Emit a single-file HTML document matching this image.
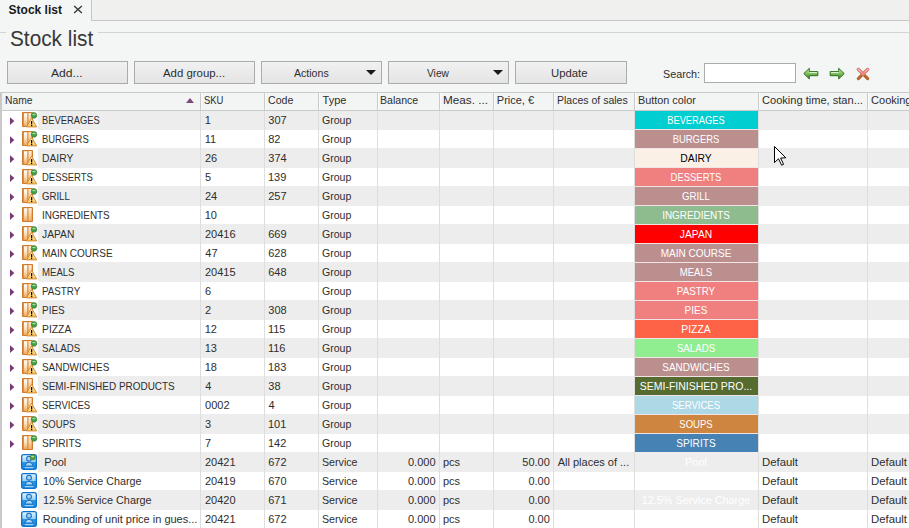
<!DOCTYPE html>
<html><head><meta charset="utf-8">
<style>
:root{--stripe:#EDEDED;--page:#F4F5F5;}
*{box-sizing:border-box;}
html,body{margin:0;padding:0;}
body{width:909px;height:528px;overflow:hidden;position:relative;background:var(--page);font-family:"Liberation Sans",sans-serif;font-size:11px;color:#2e2e2e;}
.abs{position:absolute;}
/* tab strip */
#tabfill{position:absolute;left:91px;top:0;width:818px;height:21px;background:#F0F0EF;border-left:1px solid #C6C6C6;border-bottom:1px solid #C6C6C6;}
#tabtxt{position:absolute;left:8.6px;top:2.6px;font-weight:bold;font-size:12px;line-height:14px;color:#1a1a1a;}
#tabx{position:absolute;left:73px;top:5px;width:10px;height:9px;}
/* title */
.gl{position:absolute;top:32px;height:1px;background:#D4D4D4;}
#title{position:absolute;left:9.6px;top:26px;font-size:22px;line-height:26px;color:#383838;transform:scaleX(0.945);transform-origin:0 50%;}
/* buttons */
.btn{position:absolute;top:61px;height:23px;border:1px solid #ABABAB;background:linear-gradient(#F1F1F1,#E4E4E4);}
.btn span{position:absolute;top:4px;line-height:13px;white-space:nowrap;}
.dd{position:absolute;top:8px;width:0;height:0;border-left:5px solid transparent;border-right:5px solid transparent;border-top:5px solid #1a1a1a;}
#search{position:absolute;left:663px;top:66px;line-height:13px;}
#sinput{position:absolute;left:704px;top:63px;width:92px;height:20px;background:#fff;border:1px solid #ABABAB;}
/* grid */
#gridtop{position:absolute;left:0;top:92px;width:909px;height:1px;background:#CACACA;}
#gridleft{position:absolute;left:0;top:92px;width:2px;height:436px;background:#C9C9C9;}
#hdr{position:absolute;left:2px;top:93px;width:907px;height:17px;background:#F3F4F4;}
#hdrb{position:absolute;left:2px;top:110px;width:907px;height:1px;background:#CACACA;}
.hvd{position:absolute;top:93px;width:1px;height:17px;background:#CACACA;box-shadow:1px 0 0 #FBFBFB;}

#sort{position:absolute;left:186px;top:98px;width:0;height:0;border-left:4.75px solid transparent;border-right:4.75px solid transparent;border-bottom:5px solid #7A4A7A;}
.row{position:absolute;left:38px;width:871px;height:19px;}
#namewhite{position:absolute;left:2px;top:111px;width:36px;height:417px;background:#fff;}
#gridwhite{position:absolute;left:38px;top:111px;width:871px;height:417px;background:#fff;}
.vd{position:absolute;top:111px;width:1px;height:417px;background:#DEDEDE;}
.exp{position:absolute;left:10px;}
.ic{position:absolute;overflow:visible;}
.t,.ht,.bt{position:absolute;line-height:19px;white-space:nowrap;transform-origin:0 50%;}
.ht{line-height:15px;}
.bt{top:65px!important;line-height:17px;}
.st{top:66px!important;}
.bl{position:absolute;width:400px;text-align:center;line-height:19px;white-space:nowrap;transform-origin:50% 50%;}
.t.r{text-align:right;}
.caps{letter-spacing:-0.9px;}
.btnc{position:absolute;left:635px;width:123px;height:18px;box-shadow:-1px 0 0 #F2E4E4, 0 -1px 0 #F2E4E4;}
#cursor{position:absolute;left:773px;top:145px;}
</style></head><body>
<svg width="0" height="0" style="position:absolute">
<defs>
<linearGradient id="gbookv" x1="0" y1="0" x2="0" y2="1"><stop offset="0" stop-color="#F6C890"/><stop offset="1" stop-color="#EC9638"/></linearGradient>
<linearGradient id="ghi" x1="0" y1="0" x2="0" y2="1"><stop offset="0" stop-color="#FFFFFF"/><stop offset="0.5" stop-color="#FBE2BE"/><stop offset="1" stop-color="#F0A65A"/></linearGradient>
<linearGradient id="ghi2" x1="0" y1="0" x2="0" y2="1"><stop offset="0" stop-color="#FDF0DC"/><stop offset="1" stop-color="#F2B068"/></linearGradient>
<linearGradient id="gwarn" x1="0" y1="0" x2="0" y2="1"><stop offset="0" stop-color="#FFF3C8"/><stop offset="1" stop-color="#F8C860"/></linearGradient>
<linearGradient id="gsvc" x1="0" y1="0" x2="0" y2="1"><stop offset="0" stop-color="#EAF8FF"/><stop offset="0.48" stop-color="#98D0F4"/><stop offset="0.52" stop-color="#2A96E2"/><stop offset="1" stop-color="#1A88DA"/></linearGradient><linearGradient id="gbody" x1="0" y1="0" x2="0" y2="1"><stop offset="0" stop-color="#E6F6FF"/><stop offset="1" stop-color="#6DB8EC"/></linearGradient>
<g id="book">
 <path d="M0.5 0.5 H10.5 V14.5 H0.5 Z" fill="url(#gbookv)" stroke="#CF7A2C"/>
 <rect x="1" y="1" width="1" height="13" fill="#E48E3A"/>
 <rect x="2" y="1.5" width="3.2" height="12.5" fill="url(#ghi)"/>
 <path d="M6 1 V14" stroke="#D98536" stroke-width="1" fill="none"/>
 <rect x="6.6" y="1.2" width="2.6" height="12.8" fill="url(#ghi2)"/>
</g>
<g id="warn">
 <path d="M9.6 6.3 L14.7 14.9 L4.5 14.9 Z" fill="url(#gwarn)" stroke="#D58A30" stroke-width="1" stroke-linejoin="round"/>
 <rect x="9" y="9.1" width="1.25" height="3.3" fill="#000"/>
 <rect x="9" y="13" width="1.25" height="1.1" fill="#000"/>
</g>
<g id="gdot">
 <circle cx="12" cy="3.4" r="2.8" fill="#44A044" stroke="#2F7A2F" stroke-width="0.6"/>
 <ellipse cx="12" cy="2.5" rx="1.8" ry="0.8" fill="#A6DC9E"/>
</g>
<g id="gdot2">
 <circle cx="11.8" cy="3.3" r="2.6" fill="#5E9E3A" stroke="#3F7A22" stroke-width="0.7"/>
 <ellipse cx="11.7" cy="2.5" rx="1.5" ry="0.7" fill="#B5E2AA"/>
</g>
<g id="svc">
 <rect x="0.65" y="0.65" width="14.7" height="14.7" rx="2" fill="url(#gsvc)" stroke="#0E72CC" stroke-width="1.3"/>
 <path d="M4 12.2 Q4 8.4 8 8.4 Q12 8.4 12 12.2 Z" fill="url(#gbody)" stroke="#1670C6" stroke-width="1"/>
 <circle cx="8" cy="4.7" r="2.4" fill="#A8D4F4" stroke="#1670C6" stroke-width="1.1"/>
 <path d="M3.8 13.7 H12.4" stroke="#CDEBFF" stroke-width="0.9"/>
</g>
</defs></svg>

<div id="tabfill"></div>
<div id="tabtxt">Stock list</div>
<svg id="tabx" viewBox="0 0 10 9"><path d="M1.2 1 L8.8 8 M8.8 1 L1.2 8" stroke="#3a3a3a" stroke-width="1.45"/></svg>

<div class="gl" style="left:0;width:6px"></div>
<div class="gl" style="left:98px;width:811px"></div>
<div id="title">Stock list</div>

<div class="btn" style="left:7px;width:121px"></div>
<div class="btn" style="left:134px;width:121px"></div>
<div class="btn" style="left:261px;width:121px"><div class="dd" style="left:104px"></div></div>
<div class="btn" style="left:388px;width:121px"><div class="dd" style="left:104px"></div></div>
<div class="btn" style="left:515px;width:112px"></div>
<div class="bt" style="left:51.20px;top:0px;transform:scaleX(1.101)">Add...</div><div class="bt" style="left:162.70px;top:0px;transform:scaleX(1.036)">Add group...</div><div class="bt" style="left:294.00px;top:0px;transform:scaleX(0.961)">Actions</div><div class="bt" style="left:427.41px;top:0px;transform:scaleX(0.928)">View</div><div class="bt" style="left:551.48px;top:0px;transform:scaleX(1.029)">Update</div><div class="bt st" style="left:663.11px;top:0px;transform:scaleX(0.978)">Search:</div>
<div id="sinput"></div>
<svg class="abs" style="left:803px;top:67px" width="16" height="13" viewBox="0 0 16 13">
 <defs><linearGradient id="garr" x1="0" y1="0" x2="0" y2="1"><stop offset="0" stop-color="#D8F0C8"/><stop offset="0.5" stop-color="#7CC05A"/><stop offset="1" stop-color="#3E8A2A"/></linearGradient></defs>
 <path d="M0.8 6.6 L6.3 1.3 L6.3 4.5 L14.8 4.5 L14.8 8.7 L6.3 8.7 L6.3 11.9 Z" fill="url(#garr)" stroke="#2F6E1E" stroke-width="1" stroke-linejoin="round"/>
 <path d="M6.3 5.4 H14" stroke="#F4FFF0" stroke-width="1" opacity="0.85"/>
</svg>
<svg class="abs" style="left:829px;top:67px" width="16" height="13" viewBox="0 0 16 13">
 <path d="M15.2 6.6 L9.7 1.3 L9.7 4.5 L1.2 4.5 L1.2 8.7 L9.7 8.7 L9.7 11.9 Z" fill="url(#garr)" stroke="#2F6E1E" stroke-width="1" stroke-linejoin="round"/>
 <path d="M2 5.4 H9.7" stroke="#F4FFF0" stroke-width="1" opacity="0.85"/>
</svg>
<svg class="abs" style="left:856px;top:67px" width="14" height="14" viewBox="0 0 14 14">
 <path d="M2.3 2.3 L11.7 11.7 M11.7 2.3 L2.3 11.7" stroke="#B5652E" stroke-width="3.1" stroke-linecap="round"/>
 <path d="M2.3 2.3 L7 7 L11.7 2.3" stroke="#E98585" stroke-width="3.1" stroke-linecap="round" fill="none"/>
 <path d="M2.3 2.3 L5 5 M11.7 2.3 L9 5" stroke="#F8C8C8" stroke-width="1" stroke-linecap="round" fill="none"/>
</svg>

<div id="gridtop"></div>
<div id="hdr"></div>
<div class="hvd" style="left:200px"></div><div class="hvd" style="left:264px"></div><div class="hvd" style="left:318px"></div><div class="hvd" style="left:377px"></div><div class="hvd" style="left:439px"></div><div class="hvd" style="left:493px"></div><div class="hvd" style="left:553px"></div><div class="hvd" style="left:634px"></div><div class="hvd" style="left:758px"></div><div class="hvd" style="left:867px"></div>
<div class="ht" style="left:4.86px;top:93px;transform:scaleX(0.935)">Name</div><div class="ht" style="left:204.37px;top:93px;transform:scaleX(0.859)">SKU</div><div class="ht" style="left:268.22px;top:93px;transform:scaleX(0.964)">Code</div><div class="ht" style="left:322.60px;top:93px">Type</div><div class="ht" style="left:380.44px;top:93px;transform:scaleX(0.961)">Balance</div><div class="ht" style="left:442.74px;top:93px;transform:scaleX(1.067)">Meas. ...</div><div class="ht" style="left:496.80px;top:93px">Price, €</div><div class="ht" style="left:556.84px;top:93px;transform:scaleX(0.956)">Places of sales</div><div class="ht" style="left:637.71px;top:93px;transform:scaleX(0.986)">Button color</div><div class="ht" style="left:762.10px;top:93px;transform:scaleX(1.006)">Cooking time, stan...</div><div class="ht" style="left:871.10px;top:93px">Cooking</div>
<div id="sort"></div>
<div id="namewhite"></div><div id="gridwhite"></div>
<div class="row" style="top:110px;height:20px;background:var(--stripe)"></div>
<svg class="exp" style="top:117px" width="6" height="9"><path d="M0 0.3 L4.3 4.1 L0 7.9 Z" fill="#763A76"/></svg>
<svg class="ic" style="left:22px;top:112px" width="16" height="16"><use href="#book"/><use href="#warn"/><use href="#gdot"/></svg>
<div class="t" style="left:41.84px;top:111px;transform:scaleX(0.849)">BEVERAGES</div>
<div class="t" style="left:204.70px;top:111px">1</div>
<div class="t" style="left:268.30px;top:111px">307</div>
<div class="t" style="left:322.32px;top:111px;transform:scaleX(0.960)">Group</div>
<div class="btnc" style="top:111px;background:#00CED1"></div>
<div class="bl" style="left:496px;top:111px;color:#fff;transform:scaleX(0.849)">BEVERAGES</div>
<svg class="exp" style="top:136px" width="6" height="9"><path d="M0 0.3 L4.3 4.1 L0 7.9 Z" fill="#763A76"/></svg>
<svg class="ic" style="left:22px;top:131px" width="16" height="16"><use href="#book"/><use href="#warn"/><use href="#gdot"/></svg>
<div class="t" style="left:41.83px;top:130px;transform:scaleX(0.858)">BURGERS</div>
<div class="t" style="left:204.70px;top:130px">11</div>
<div class="t" style="left:268.20px;top:130px">82</div>
<div class="t" style="left:322.32px;top:130px;transform:scaleX(0.960)">Group</div>
<div class="btnc" style="top:130px;background:#BC8F8F"></div>
<div class="bl" style="left:496px;top:130px;color:#fff;transform:scaleX(0.858)">BURGERS</div>
<div class="row" style="top:148px;height:20px;background:var(--stripe)"></div>
<svg class="exp" style="top:155px" width="6" height="9"><path d="M0 0.3 L4.3 4.1 L0 7.9 Z" fill="#763A76"/></svg>
<svg class="ic" style="left:22px;top:150px" width="16" height="16"><use href="#book"/><use href="#warn"/></svg>
<div class="t" style="left:41.76px;top:149px;transform:scaleX(0.938)">DAIRY</div>
<div class="t" style="left:205.00px;top:149px">26</div>
<div class="t" style="left:268.30px;top:149px">374</div>
<div class="t" style="left:322.32px;top:149px;transform:scaleX(0.960)">Group</div>
<div class="btnc" style="top:149px;background:#FAF0E6"></div>
<div class="bl" style="left:496px;top:149px;color:#000;transform:scaleX(0.938)">DAIRY</div>
<svg class="exp" style="top:174px" width="6" height="9"><path d="M0 0.3 L4.3 4.1 L0 7.9 Z" fill="#763A76"/></svg>
<svg class="ic" style="left:22px;top:169px" width="16" height="16"><use href="#book"/><use href="#warn"/><use href="#gdot"/></svg>
<div class="t" style="left:41.83px;top:168px;transform:scaleX(0.860)">DESSERTS</div>
<div class="t" style="left:205.10px;top:168px">5</div>
<div class="t" style="left:267.90px;top:168px">139</div>
<div class="t" style="left:322.32px;top:168px;transform:scaleX(0.960)">Group</div>
<div class="btnc" style="top:168px;background:#F08080"></div>
<div class="bl" style="left:496px;top:168px;color:#fff;transform:scaleX(0.860)">DESSERTS</div>
<div class="row" style="top:186px;height:20px;background:var(--stripe)"></div>
<svg class="exp" style="top:193px" width="6" height="9"><path d="M0 0.3 L4.3 4.1 L0 7.9 Z" fill="#763A76"/></svg>
<svg class="ic" style="left:22px;top:188px" width="16" height="16"><use href="#book"/><use href="#warn"/><use href="#gdot"/></svg>
<div class="t" style="left:42.16px;top:187px;transform:scaleX(0.874)">GRILL</div>
<div class="t" style="left:205.00px;top:187px">24</div>
<div class="t" style="left:268.20px;top:187px">257</div>
<div class="t" style="left:322.32px;top:187px;transform:scaleX(0.960)">Group</div>
<div class="btnc" style="top:187px;background:#BC8F8F"></div>
<div class="bl" style="left:496px;top:187px;color:#fff;transform:scaleX(0.874)">GRILL</div>
<svg class="exp" style="top:212px" width="6" height="9"><path d="M0 0.3 L4.3 4.1 L0 7.9 Z" fill="#763A76"/></svg>
<svg class="ic" style="left:22px;top:207px" width="16" height="16"><use href="#book"/></svg>
<div class="t" style="left:41.70px;top:206px;transform:scaleX(0.901)">INGREDIENTS</div>
<div class="t" style="left:204.70px;top:206px">10</div>
<div class="t" style="left:322.32px;top:206px;transform:scaleX(0.960)">Group</div>
<div class="btnc" style="top:206px;background:#8FBC8F"></div>
<div class="bl" style="left:496px;top:206px;color:#fff;transform:scaleX(0.901)">INGREDIENTS</div>
<div class="row" style="top:224px;height:20px;background:var(--stripe)"></div>
<svg class="exp" style="top:231px" width="6" height="9"><path d="M0 0.3 L4.3 4.1 L0 7.9 Z" fill="#763A76"/></svg>
<svg class="ic" style="left:22px;top:226px" width="16" height="16"><use href="#book"/><use href="#warn"/><use href="#gdot"/></svg>
<div class="t" style="left:42.41px;top:225px;transform:scaleX(0.932)">JAPAN</div>
<div class="t" style="left:205.00px;top:225px">20416</div>
<div class="t" style="left:268.20px;top:225px">669</div>
<div class="t" style="left:322.32px;top:225px;transform:scaleX(0.960)">Group</div>
<div class="btnc" style="top:225px;background:#FF0000"></div>
<div class="bl" style="left:496px;top:225px;color:#fff;transform:scaleX(0.932)">JAPAN</div>
<svg class="exp" style="top:250px" width="6" height="9"><path d="M0 0.3 L4.3 4.1 L0 7.9 Z" fill="#763A76"/></svg>
<svg class="ic" style="left:22px;top:245px" width="16" height="16"><use href="#book"/><use href="#warn"/><use href="#gdot"/></svg>
<div class="t" style="left:41.78px;top:244px;transform:scaleX(0.911)">MAIN COURSE</div>
<div class="t" style="left:205.30px;top:244px">47</div>
<div class="t" style="left:268.20px;top:244px">628</div>
<div class="t" style="left:322.32px;top:244px;transform:scaleX(0.960)">Group</div>
<div class="btnc" style="top:244px;background:#BC8F8F"></div>
<div class="bl" style="left:496px;top:244px;color:#fff;transform:scaleX(0.911)">MAIN COURSE</div>
<div class="row" style="top:262px;height:20px;background:var(--stripe)"></div>
<svg class="exp" style="top:269px" width="6" height="9"><path d="M0 0.3 L4.3 4.1 L0 7.9 Z" fill="#763A76"/></svg>
<svg class="ic" style="left:22px;top:264px" width="16" height="16"><use href="#book"/><use href="#warn"/></svg>
<div class="t" style="left:41.82px;top:263px;transform:scaleX(0.872)">MEALS</div>
<div class="t" style="left:205.00px;top:263px">20415</div>
<div class="t" style="left:268.20px;top:263px">648</div>
<div class="t" style="left:322.32px;top:263px;transform:scaleX(0.960)">Group</div>
<div class="btnc" style="top:263px;background:#BC8F8F"></div>
<div class="bl" style="left:496px;top:263px;color:#fff;transform:scaleX(0.872)">MEALS</div>
<svg class="exp" style="top:288px" width="6" height="9"><path d="M0 0.3 L4.3 4.1 L0 7.9 Z" fill="#763A76"/></svg>
<svg class="ic" style="left:22px;top:283px" width="16" height="16"><use href="#book"/><use href="#warn"/><use href="#gdot"/></svg>
<div class="t" style="left:41.80px;top:282px;transform:scaleX(0.890)">PASTRY</div>
<div class="t" style="left:205.00px;top:282px">6</div>
<div class="t" style="left:322.32px;top:282px;transform:scaleX(0.960)">Group</div>
<div class="btnc" style="top:282px;background:#F08080"></div>
<div class="bl" style="left:496px;top:282px;color:#fff;transform:scaleX(0.890)">PASTRY</div>
<div class="row" style="top:300px;height:20px;background:var(--stripe)"></div>
<svg class="exp" style="top:307px" width="6" height="9"><path d="M0 0.3 L4.3 4.1 L0 7.9 Z" fill="#763A76"/></svg>
<svg class="ic" style="left:22px;top:302px" width="16" height="16"><use href="#book"/><use href="#warn"/><use href="#gdot"/></svg>
<div class="t" style="left:41.78px;top:301px;transform:scaleX(0.907)">PIES</div>
<div class="t" style="left:205.00px;top:301px">2</div>
<div class="t" style="left:268.30px;top:301px">308</div>
<div class="t" style="left:322.32px;top:301px;transform:scaleX(0.960)">Group</div>
<div class="btnc" style="top:301px;background:#F08080"></div>
<div class="bl" style="left:496px;top:301px;color:#fff;transform:scaleX(0.907)">PIES</div>
<svg class="exp" style="top:326px" width="6" height="9"><path d="M0 0.3 L4.3 4.1 L0 7.9 Z" fill="#763A76"/></svg>
<svg class="ic" style="left:22px;top:321px" width="16" height="16"><use href="#book"/><use href="#warn"/><use href="#gdot"/></svg>
<div class="t" style="left:41.75px;top:320px;transform:scaleX(0.940)">PIZZA</div>
<div class="t" style="left:204.70px;top:320px">12</div>
<div class="t" style="left:267.90px;top:320px">115</div>
<div class="t" style="left:322.32px;top:320px;transform:scaleX(0.960)">Group</div>
<div class="btnc" style="top:320px;background:#FF6347"></div>
<div class="bl" style="left:496px;top:320px;color:#fff;transform:scaleX(0.940)">PIZZA</div>
<div class="row" style="top:338px;height:20px;background:var(--stripe)"></div>
<svg class="exp" style="top:345px" width="6" height="9"><path d="M0 0.3 L4.3 4.1 L0 7.9 Z" fill="#763A76"/></svg>
<svg class="ic" style="left:22px;top:340px" width="16" height="16"><use href="#book"/><use href="#warn"/><use href="#gdot"/></svg>
<div class="t" style="left:42.16px;top:339px;transform:scaleX(0.880)">SALADS</div>
<div class="t" style="left:204.70px;top:339px">13</div>
<div class="t" style="left:267.90px;top:339px">116</div>
<div class="t" style="left:322.32px;top:339px;transform:scaleX(0.960)">Group</div>
<div class="btnc" style="top:339px;background:#90EE90"></div>
<div class="bl" style="left:496px;top:339px;color:#fff;transform:scaleX(0.880)">SALADS</div>
<svg class="exp" style="top:364px" width="6" height="9"><path d="M0 0.3 L4.3 4.1 L0 7.9 Z" fill="#763A76"/></svg>
<svg class="ic" style="left:22px;top:359px" width="16" height="16"><use href="#book"/><use href="#warn"/><use href="#gdot"/></svg>
<div class="t" style="left:42.15px;top:358px;transform:scaleX(0.902)">SANDWICHES</div>
<div class="t" style="left:204.70px;top:358px">18</div>
<div class="t" style="left:267.90px;top:358px">183</div>
<div class="t" style="left:322.32px;top:358px;transform:scaleX(0.960)">Group</div>
<div class="btnc" style="top:358px;background:#BC8F8F"></div>
<div class="bl" style="left:496px;top:358px;color:#fff;transform:scaleX(0.902)">SANDWICHES</div>
<div class="row" style="top:376px;height:20px;background:var(--stripe)"></div>
<svg class="exp" style="top:383px" width="6" height="9"><path d="M0 0.3 L4.3 4.1 L0 7.9 Z" fill="#763A76"/></svg>
<svg class="ic" style="left:22px;top:378px" width="16" height="16"><use href="#book"/><use href="#warn"/></svg>
<div class="t" style="left:42.15px;top:377px;transform:scaleX(0.905)">SEMI-FINISHED PRODUCTS</div>
<div class="t" style="left:205.30px;top:377px">4</div>
<div class="t" style="left:268.30px;top:377px">38</div>
<div class="t" style="left:322.32px;top:377px;transform:scaleX(0.960)">Group</div>
<div class="btnc" style="top:377px;background:#556B2F"></div>
<div class="bl" style="left:496px;top:377px;color:#fff;transform:scaleX(0.953)">SEMI-FINISHED PRO...</div>
<svg class="exp" style="top:402px" width="6" height="9"><path d="M0 0.3 L4.3 4.1 L0 7.9 Z" fill="#763A76"/></svg>
<svg class="ic" style="left:22px;top:397px" width="16" height="16"><use href="#book"/><use href="#warn"/></svg>
<div class="t" style="left:42.17px;top:396px;transform:scaleX(0.869)">SERVICES</div>
<div class="t" style="left:205.10px;top:396px">0002</div>
<div class="t" style="left:268.50px;top:396px">4</div>
<div class="t" style="left:322.32px;top:396px;transform:scaleX(0.960)">Group</div>
<div class="btnc" style="top:396px;background:#ADD8E6"></div>
<div class="bl" style="left:496px;top:396px;color:#fff;transform:scaleX(0.869)">SERVICES</div>
<div class="row" style="top:414px;height:20px;background:var(--stripe)"></div>
<svg class="exp" style="top:421px" width="6" height="9"><path d="M0 0.3 L4.3 4.1 L0 7.9 Z" fill="#763A76"/></svg>
<svg class="ic" style="left:22px;top:416px" width="16" height="16"><use href="#book"/><use href="#warn"/><use href="#gdot"/></svg>
<div class="t" style="left:42.17px;top:415px;transform:scaleX(0.867)">SOUPS</div>
<div class="t" style="left:205.10px;top:415px">3</div>
<div class="t" style="left:267.90px;top:415px">101</div>
<div class="t" style="left:322.32px;top:415px;transform:scaleX(0.960)">Group</div>
<div class="btnc" style="top:415px;background:#CD853F"></div>
<div class="bl" style="left:496px;top:415px;color:#fff;transform:scaleX(0.867)">SOUPS</div>
<svg class="exp" style="top:440px" width="6" height="9"><path d="M0 0.3 L4.3 4.1 L0 7.9 Z" fill="#763A76"/></svg>
<svg class="ic" style="left:22px;top:435px" width="16" height="16"><use href="#book"/><use href="#gdot"/></svg>
<div class="t" style="left:42.14px;top:434px;transform:scaleX(0.919)">SPIRITS</div>
<div class="t" style="left:204.90px;top:434px">7</div>
<div class="t" style="left:267.90px;top:434px">142</div>
<div class="t" style="left:322.32px;top:434px;transform:scaleX(0.960)">Group</div>
<div class="btnc" style="top:434px;background:#4682B4"></div>
<div class="bl" style="left:496px;top:434px;color:#fff;transform:scaleX(0.919)">SPIRITS</div>
<div class="row" style="top:452px;height:20px;background:var(--stripe)"></div>
<svg class="ic" style="left:21px;top:454px" width="16" height="16"><use href="#svc"/><use href="#gdot2"/></svg>
<div class="t" style="left:44.30px;top:453px">Pool</div>
<div class="t" style="left:205.00px;top:453px">20421</div>
<div class="t" style="left:268.20px;top:453px">672</div>
<div class="t" style="left:322.32px;top:453px;transform:scaleX(0.969)">Service</div>
<div class="t r" style="right:473.5px;top:453px">0.000</div>
<div class="t" style="left:443.00px;top:453px">pcs</div>
<div class="t r" style="right:359.20000000000005px;top:453px">50.00</div>
<div class="t" style="left:557.70px;top:453px">All places of ...</div>
<div class="bl" style="left:496px;top:453px;color:#fff">Pool</div>
<div class="t" style="left:761.67px;top:453px;transform:scaleX(1.032)">Default</div>
<div class="t" style="left:870.67px;top:453px;transform:scaleX(1.032)">Default</div>
<svg class="ic" style="left:21px;top:473px" width="16" height="16"><use href="#svc"/></svg>
<div class="t" style="left:42.82px;top:472px;transform:scaleX(0.976)">10% Service Charge</div>
<div class="t" style="left:205.00px;top:472px">20419</div>
<div class="t" style="left:268.20px;top:472px">670</div>
<div class="t" style="left:322.32px;top:472px;transform:scaleX(0.969)">Service</div>
<div class="t r" style="right:473.5px;top:472px">0.000</div>
<div class="t" style="left:443.00px;top:472px">pcs</div>
<div class="t r" style="right:359.20000000000005px;top:472px">0.00</div>
<div class="t" style="left:761.67px;top:472px;transform:scaleX(1.032)">Default</div>
<div class="t" style="left:870.67px;top:472px;transform:scaleX(1.032)">Default</div>
<div class="row" style="top:490px;height:20px;background:var(--stripe)"></div>
<svg class="ic" style="left:21px;top:492px" width="16" height="16"><use href="#svc"/></svg>
<div class="t" style="left:42.81px;top:491px;transform:scaleX(0.987)">12.5% Service Charge</div>
<div class="t" style="left:205.00px;top:491px">20420</div>
<div class="t" style="left:268.20px;top:491px">671</div>
<div class="t" style="left:322.32px;top:491px;transform:scaleX(0.969)">Service</div>
<div class="t r" style="right:473.5px;top:491px">0.000</div>
<div class="t" style="left:443.00px;top:491px">pcs</div>
<div class="t r" style="right:359.20000000000005px;top:491px">0.00</div>
<div class="bl" style="left:496px;top:491px;color:#fff;transform:scaleX(0.987)">12.5% Service Charge</div>
<div class="t" style="left:761.67px;top:491px;transform:scaleX(1.032)">Default</div>
<div class="t" style="left:870.67px;top:491px;transform:scaleX(1.032)">Default</div>
<svg class="ic" style="left:21px;top:511px" width="16" height="16"><use href="#svc"/></svg>
<div class="t" style="left:42.70px;top:510px">Rounding of unit price in gues...</div>
<div class="t" style="left:205.00px;top:510px">20421</div>
<div class="t" style="left:268.20px;top:510px">672</div>
<div class="t" style="left:322.32px;top:510px;transform:scaleX(0.969)">Service</div>
<div class="t r" style="right:473.5px;top:510px">0.000</div>
<div class="t" style="left:443.00px;top:510px">pcs</div>
<div class="t r" style="right:359.20000000000005px;top:510px">0.00</div>
<div class="t" style="left:761.67px;top:510px;transform:scaleX(1.032)">Default</div>
<div class="t" style="left:870.67px;top:510px;transform:scaleX(1.032)">Default</div>
<div class="vd" style="left:200px"></div><div class="vd" style="left:264px"></div><div class="vd" style="left:318px"></div><div class="vd" style="left:377px"></div><div class="vd" style="left:439px"></div><div class="vd" style="left:493px"></div><div class="vd" style="left:553px"></div><div class="vd" style="left:634px"></div><div class="vd" style="left:758px"></div><div class="vd" style="left:867px"></div>
<div id="hdrb"></div>
<div id="gridleft"></div>

<svg id="cursor" width="16" height="22" viewBox="0 0 16 22">
 <path d="M1.5 1.5 L1.5 17.5 L5.5 13.8 L8.6 20.2 L10.6 19.3 L7.6 13 L12.8 12.8 Z" fill="#fff" stroke="#000" stroke-width="1" stroke-linejoin="miter"/>
</svg>
</body></html>
